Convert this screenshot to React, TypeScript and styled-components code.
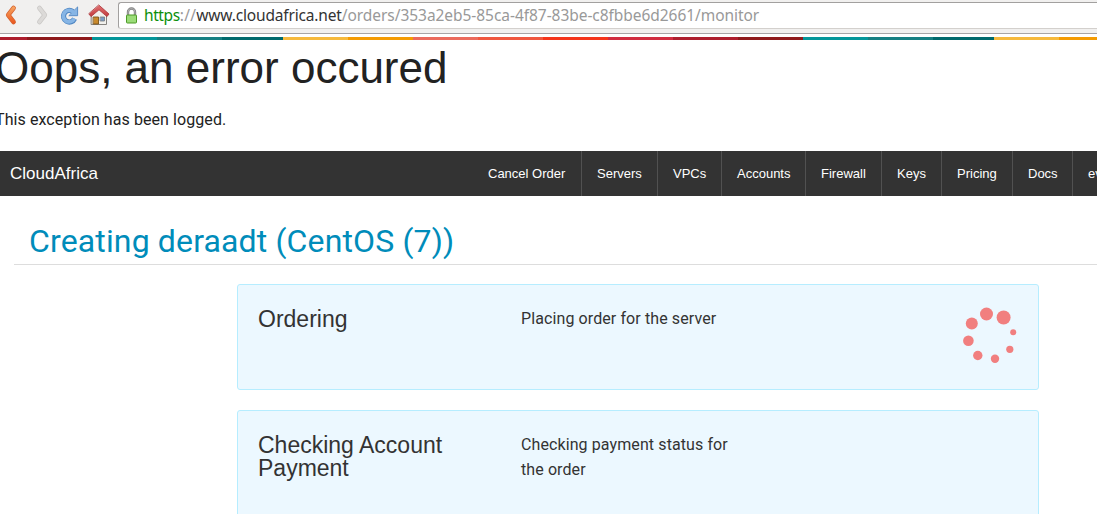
import React from 'react';
import styled, { createGlobalStyle } from 'styled-components';

const GlobalStyle = createGlobalStyle`
  * { box-sizing: border-box; }
  html, body { margin: 0; padding: 0; }
  body { background: #fff; height: 514px; overflow: hidden; color: #222; font-family: Roboto, sans-serif; }
`;

const Page = styled.div`
  width: 1097px;
  height: 514px;
  overflow: hidden;
  background: #fff;
`;

const BrowserBar = styled.header`
  display: flex;
  height: 34px;
  background: #f1f0ef;
  border-bottom: 1px solid #a7a5a7;
`;

const BrowserIcons = styled.svg`
  flex: none;
  width: 118px;
  height: 33px;
`;

const AddressField = styled.div`
  flex: 1;
  display: flex;
  height: 27px;
  margin-top: 2px;
  background: #fff;
  border: 1px solid #a2a09f;
  border-right: 0;
  border-bottom-color: #d3d0cd;
  border-radius: 3px 0 0 3px;
`;

const Lock = styled.svg`
  flex: none;
  width: 14px;
  height: 20px;
  margin: 3px 6px 0 5px;
`;

const Url = styled.div`
  font-family: 'Noto Sans', sans-serif;
  font-size: 15.5px;
  line-height: 24px;
  white-space: nowrap;
`;

const UrlPart = styled.span<{ $color: string; $spacing: number }>`
  color: ${(p) => p.$color};
  letter-spacing: ${(p) => p.$spacing}px;
`;

const Stripe = styled.div`
  display: flex;
  height: 3px;
  margin-top: 3px;
`;

const StripeSegment = styled.div<{ $color: string; $width: number }>`
  flex: none;
  width: ${(p) => p.$width}px;
  background: ${(p) => p.$color};
`;

const ErrorBlock = styled.section`
  height: 111px;
  margin-left: -5px;
`;

const ErrorTitle = styled.h1`
  margin: 0;
  padding-top: 2px;
  font: 400 44px/52px 'Liberation Sans', sans-serif;
  color: #222;
`;

const ErrorText = styled.p`
  margin: 13px 0 0;
  font-size: 16px;
  line-height: 26px;
  letter-spacing: 0.08px;
`;

const NavBar = styled.nav`
  display: flex;
  justify-content: space-between;
  height: 45px;
  background: #333;
  color: #fff;
  font: 13px/45px 'Liberation Sans', sans-serif;
  white-space: nowrap;
`;

const Brand = styled.div`
  padding-left: 10px;
  font-size: 17px;
`;

const Menu = styled.div`
  display: flex;
  width: 624px;
  overflow: hidden;
`;

const MenuItem = styled.a<{ $width: number }>`
  flex: none;
  width: ${(p) => p.$width}px;
  padding-left: 15px;
  border-right: 1px solid #515151;
`;

const PageTitle = styled.h2`
  margin: 20px 0 0 14px;
  padding-left: 15px;
  height: 49px;
  border-bottom: 1px solid #ddd;
  font-size: 32px;
  font-weight: 400;
  line-height: 50px;
  letter-spacing: 0.14px;
  color: #008cba;
`;

const Steps = styled.main`
  display: flex;
  flex-direction: column;
  gap: 20px;
  width: 802px;
  margin: 19px 0 0 237px;
`;

const StepPanel = styled.article<{ $height: number }>`
  display: grid;
  grid-template-columns: 263px 220px 1fr;
  height: ${(p) => p.$height}px;
  padding: 20px;
  background: #ecf8ff;
  border: 1px solid #b6edff;
  border-radius: 3px;
  color: #333;
`;

const StepName = styled.h3`
  margin: 3px 0 0;
  width: 215px;
  font: 400 23px/23px 'Liberation Sans', sans-serif;
`;

const StepText = styled.p`
  margin: 1px 0 0;
  font-size: 16px;
  line-height: 25px;
  letter-spacing: 0.1px;
`;

const Spinner = styled.svg`
  justify-self: end;
  width: 60px;
  height: 60px;
`;

const segments: [string, number][] = [
  ['#ae1e2e', 27], ['#8f1a1c', 65],
  ['#04969a', 65], ['#157f82', 65], ['#00696c', 61],
  ['#f6b93c', 65], ['#f49b03', 65],
  ['#eb6a5c', 65], ['#f0573f', 65], ['#f5351c', 65], ['#d12c40', 65],
  ['#ae1e2e', 65], ['#8f1a1c', 65],
  ['#04969a', 65], ['#157f82', 65], ['#00696c', 61],
  ['#f6b93c', 65], ['#f49b03', 38],
];

const menu: [string, number][] = [
  ['Cancel Order', 109], ['Servers', 76], ['VPCs', 64], ['Accounts', 84],
  ['Firewall', 76], ['Keys', 60], ['Pricing', 71], ['Docs', 60], ['evert', 80],
];

const dots: [number, number, number][] = [
  [28.5, 9, 6.5], [45.6, 12.5, 7], [13.8, 18.6, 6], [10.4, 35.7, 5.3],
  [19.8, 50.5, 4.7], [37, 53.7, 4.2], [51.8, 44.3, 3.6], [55.2, 27.2, 3],
];

export default function App() {
  return (
    <Page>
      <GlobalStyle />
      <BrowserBar>
        <BrowserIcons viewBox="0 0 118 33" fill="none" strokeLinejoin="round" strokeLinecap="round">
          <defs>
            <linearGradient id="back" gradientUnits="userSpaceOnUse" x1="0" y1="6" x2="0" y2="24">
              <stop offset="0" stopColor="#f8a864" />
              <stop offset="1" stopColor="#e9541c" />
            </linearGradient>
            <linearGradient id="roof" x1="0" y1="0" x2="0" y2="1">
              <stop offset="0" stopColor="#e27272" />
              <stop offset="1" stopColor="#c23a3e" />
            </linearGradient>
          </defs>
          <path d="M13.6 8 L8.2 15 L13.6 22" stroke="#d4622f" strokeWidth="4.6" />
          <path d="M13.6 8 L8.2 15 L13.6 22" stroke="url(#back)" strokeWidth="3.2" />
          <path d="M39.4 8 L44.8 15 L39.4 22" stroke="#c9c7c5" strokeWidth="4.6" />
          <path d="M39.4 8 L44.8 15 L39.4 22" stroke="#dcdad8" strokeWidth="3.2" />
          <path d="M72.8 11.6 A5.8 5.8 0 1 0 74.6 18.6" stroke="#4f86c2" strokeWidth="5.2" strokeLinecap="butt" />
          <path d="M77.6 7.3 V15.7 H69.2 Z" fill="#86b5e5" stroke="#4f86c2" strokeWidth=".9" />
          <path d="M73.6 12.4 A5.8 5.8 0 1 0 74.4 18.4" stroke="#86b5e5" strokeWidth="3.6" strokeLinecap="butt" />
          <path d="M91.5 14 L99 7.5 L106.5 14 V24.5 H91.5 Z" fill="#f1f0ec" stroke="#85837f" strokeWidth="1" />
          <path d="M93.5 17 H98.5 V24 H93.5 Z" fill="#c8892c" stroke="#7c5418" strokeWidth=".9" />
          <path d="M100.5 17 H104.5 V21 H100.5 Z" fill="#7a9cc6" stroke="#77797c" strokeWidth=".8" />
          <path d="M99 5.2 L109 14 L107 16.6 L99 9.8 L91 16.6 L89 14 Z" fill="url(#roof)" stroke="#a93034" strokeWidth=".8" />
        </BrowserIcons>
        <AddressField>
          <Lock viewBox="0 0 14 20">
            <path d="M4 10 V6 A3.5 3.5 0 0 1 11 6 V10" fill="none" stroke="#7f7f7f" strokeWidth="2.4" />
            <path d="M4 10 V6 A3.5 3.5 0 0 1 11 6 V10" fill="none" stroke="#bcbcbc" strokeWidth=".8" />
            <rect x="2.5" y="9" width="10" height="8" rx=".8" fill="#9bdc78" stroke="#4c9a27" />
          </Lock>
          <Url>
            <UrlPart $color="#0b8f0b" $spacing={-0.4}>https</UrlPart>
            <UrlPart $color="#999" $spacing={0.3}>://</UrlPart>
            <UrlPart $color="#333" $spacing={-0.17}>www.cloudafrica.net</UrlPart>
            <UrlPart $color="#999" $spacing={-0.05}>/orders/353a2eb5-85ca-4f87-83be-c8fbbe6d2661/monitor</UrlPart>
          </Url>
        </AddressField>
      </BrowserBar>
      <Stripe>
        {segments.map(([color, width], i) => (
          <StripeSegment key={i} $color={color} $width={width} />
        ))}
      </Stripe>
      <ErrorBlock>
        <ErrorTitle>Oops, an error occured</ErrorTitle>
        <ErrorText>This exception has been logged.</ErrorText>
      </ErrorBlock>
      <NavBar>
        <Brand>CloudAfrica</Brand>
        <Menu>
          {menu.map(([label, width]) => (
            <MenuItem key={label} $width={width}>{label}</MenuItem>
          ))}
        </Menu>
      </NavBar>
      <PageTitle>Creating deraadt (CentOS (7))</PageTitle>
      <Steps>
        <StepPanel $height={106}>
          <StepName>Ordering</StepName>
          <StepText>Placing order for the server</StepText>
          <Spinner viewBox="0 0 60 60">
            {dots.map(([x, y, r]) => (
              <circle key={x} cx={x} cy={y} r={r} fill="#f17f7f" />
            ))}
          </Spinner>
        </StepPanel>
        <StepPanel $height={126}>
          <StepName>Checking Account Payment</StepName>
          <StepText>Checking payment status for the order</StepText>
        </StepPanel>
      </Steps>
    </Page>
  );
}
